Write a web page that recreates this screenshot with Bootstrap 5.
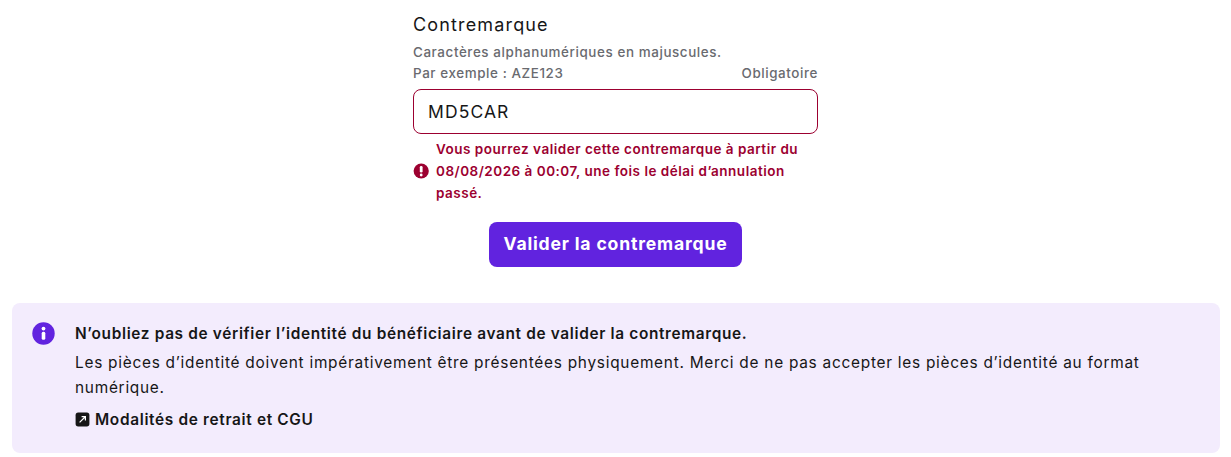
<!DOCTYPE html>
<html lang="fr">
<head>
<meta charset="utf-8">
<title>Contremarque</title>
<link href="https://cdn.jsdelivr.net/npm/bootstrap@5.3.0/dist/css/bootstrap.min.css" rel="stylesheet">
<style>
html,body{height:457px;overflow:hidden}
body{font-family:Inter,"Noto Sans",sans-serif;color:#161617;background:#fff;padding:0 11px 0 12px}
.form-wrap{padding-right:1px}
.form-zone{width:405px;padding-top:14px}
.field-title{font-size:18px;line-height:22px;font-weight:400;letter-spacing:1.15px;margin-bottom:6px;color:#161617}
.hint{font-size:13.4px;line-height:21px;font-weight:500;color:#696a6f;letter-spacing:.6px}
.code-input.form-control{height:45px;margin-top:5px;border:1px solid #9c0030;border-radius:8px;padding:0 14px;font-size:17.5px;font-weight:400;letter-spacing:1.1px;color:#161617;box-shadow:none}
.err-row{margin-top:4px;color:#9c0030;font-size:13.5px;line-height:22px;font-weight:600;letter-spacing:.5px}
.err-row svg{flex:none;margin-right:7px}
.validate-btn.btn{display:block;margin:18px auto 0;height:45px;width:253px;padding:0;background:#6123df;border:0;border-radius:8px;color:#fff;font-size:17.6px;font-weight:700;letter-spacing:.82px}
.info-panel{margin-top:36px;height:150px;background:#f3ecfd;border-radius:8px;padding:18px 20px 0 20px}
.info-panel svg{flex:none}
.info-mark{margin-top:1px}
.info-body{margin-left:20px;font-size:15.4px;line-height:25px;letter-spacing:.74px}
.info-title{font-weight:600;margin-bottom:4px;letter-spacing:.66px}
.ext-link{display:inline-flex;align-items:center;gap:5px;margin-top:7px;font-weight:600;font-size:15.4px;letter-spacing:.67px;color:#161617;text-decoration:none}
</style>
</head>
<body>
<main>
  <div class="form-wrap">
  <div class="form-zone mx-auto">
    <div class="field-title">Contremarque</div>
    <div class="hint">Caractères alphanumériques en majuscules.</div>
    <div class="hint d-flex justify-content-between"><span>Par exemple : AZE123</span><span>Obligatoire</span></div>
    <input class="form-control code-input" type="text" value="MD5CAR" aria-label="Contremarque">
    <div class="err-row d-flex align-items-center">
      <svg width="16" height="16" viewBox="0 0 16 16" aria-hidden="true"><circle cx="8.2" cy="8" r="7.6" fill="#9c0030"/><rect x="6.8" y="3" width="2.8" height="6.6" rx="1.3" fill="#fff"/><circle cx="8.2" cy="12" r="1.4" fill="#fff"/></svg>
      <span>Vous pourrez valider cette contremarque à partir du 08/08/2026 à 00:07, une fois le délai d’annulation passé.</span>
    </div>
    <button class="btn validate-btn" type="button">Valider la contremarque</button>
  </div>
  </div>
  <section class="info-panel d-flex align-items-start">
    <svg class="info-mark" width="23" height="23" viewBox="0 0 23 23" aria-hidden="true"><circle cx="11.5" cy="11.5" r="11.2" fill="#6123df"/><circle cx="11.5" cy="6.6" r="1.9" fill="#fff"/><rect x="9.7" y="9.8" width="3.6" height="8" rx="1.5" fill="#fff"/></svg>
    <div class="info-body">
      <div class="info-title">N’oubliez pas de vérifier l’identité du bénéficiaire avant de valider la contremarque.</div>
      <div>Les pièces d’identité doivent impérativement être présentées physiquement. Merci de ne pas accepter les pièces d’identité au format numérique.</div>
      <a class="ext-link" href="#">
        <svg width="15" height="15" viewBox="0 0 15 15" aria-hidden="true"><rect x=".6" y=".6" width="13.8" height="13.8" rx="2.6" fill="#161617"/><path d="M4.6 10.4 10 5M6.6 4.6h3.8v3.8" fill="none" stroke="#fff" stroke-width="1.2"/></svg>
        Modalités de retrait et CGU
      </a>
    </div>
  </section>
</main>
<script src="https://cdn.jsdelivr.net/npm/bootstrap@5.3.0/dist/js/bootstrap.bundle.min.js"></script>
</body>
</html>
